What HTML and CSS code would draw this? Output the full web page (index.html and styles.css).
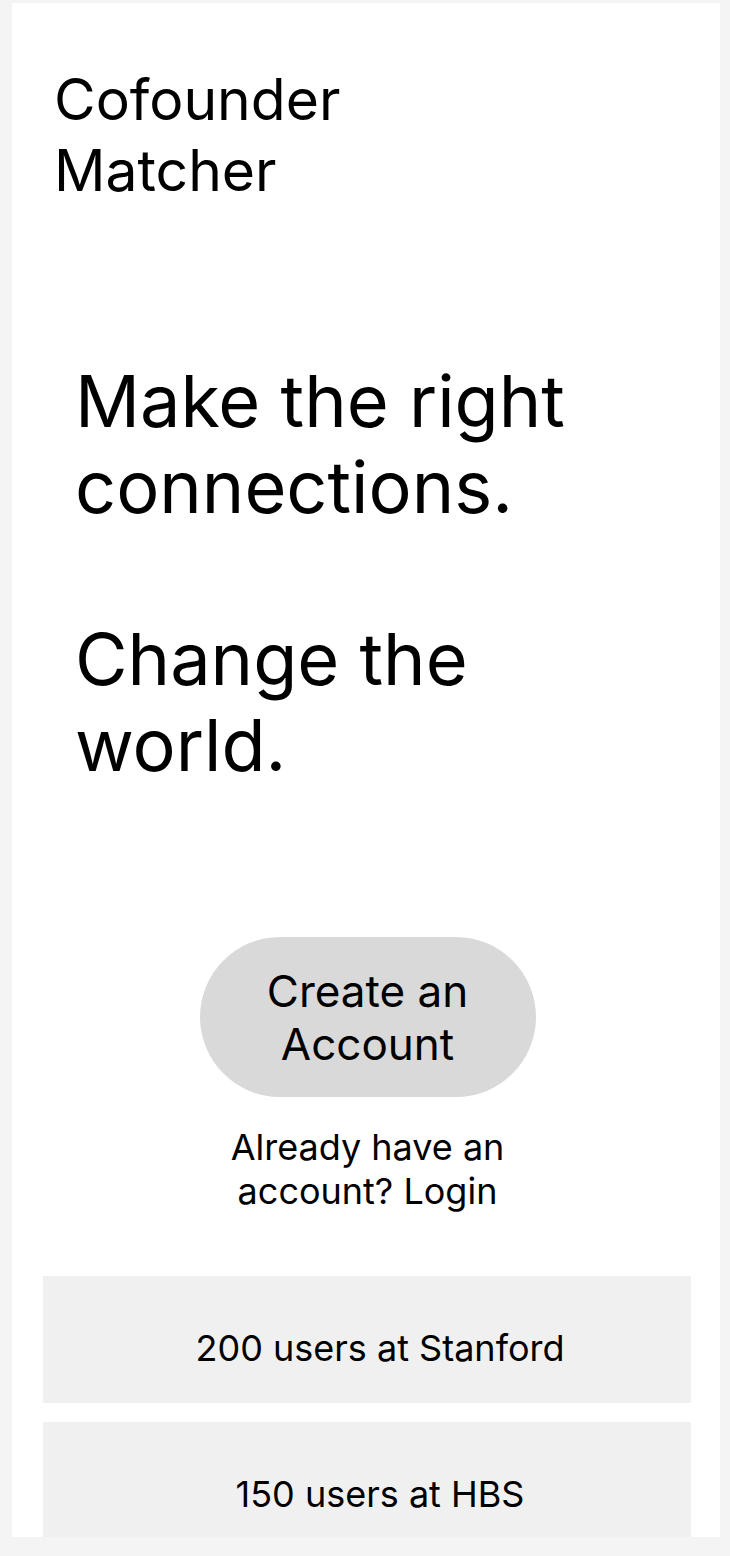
FILE: index.html
```html
<!DOCTYPE html>
<html lang="en">
<head>
<meta charset="utf-8">
<title>Cofounder Matcher</title>
<link rel="stylesheet" href="styles.css">
</head>
<body>
<main class="panel">
  <header class="brand">Cofounder<br>Matcher</header>
  <section class="hero">
    <p class="hero-line">Make the right connections.</p>
    <p class="hero-line">Change the world.</p>
  </section>
  <section class="cta">
    <button class="cta-button">Create an Account</button>
    <p class="login">Already have an account? Login</p>
  </section>
  <section class="stats">
    <div class="stat">200 users at Stanford</div>
    <div class="stat">150 users at HBS</div>
  </section>
</main>
</body>
</html>
```

FILE: styles.css
```css
html, body {
  margin: 0;
  padding: 0;
}
body {
  background: #f4f4f4;
  font-family: Inter, "Noto Sans", sans-serif;
  color: #000;
  height: 1556px;
  overflow: hidden;
}
.panel {
  box-sizing: border-box;
  margin: 3px 0 0 12px;
  width: 708px;
  height: 1534px;
  background: #fff;
  overflow: hidden;
  padding-top: 61px;
}
.brand {
  padding-left: 42px;
  font-size: 57px;
  line-height: 71px;
}
.hero {
  margin-top: 152px;
  padding-left: 63px;
  width: 520px;
}
.hero-line {
  margin: 0;
  font-size: 72px;
  line-height: 86px;
}
.hero-line + .hero-line {
  margin-top: 86px;
}
.cta {
  margin-top: 149px;
  padding-left: 3px;
  display: flex;
  flex-direction: column;
  align-items: center;
}
.cta-button {
  box-sizing: border-box;
  width: 336px;
  height: 160px;
  padding: 2px 20px 0;
  border: none;
  border-radius: 80px;
  background: #d9d9d9;
  font-family: inherit;
  font-size: 44px;
  line-height: 53px;
  color: #000;
}
.login {
  margin: 28px 0 0;
  width: 320px;
  text-align: center;
  font-size: 36px;
  line-height: 44px;
}
.stats {
  margin: 63px 29px 0 31px;
  display: flex;
  flex-direction: column;
  gap: 19px;
}
.stat {
  box-sizing: border-box;
  height: 127px;
  padding: 50px 0 0 26px;
  background: #f0f0f0;
  text-align: center;
  font-size: 36px;
  line-height: 44px;
}
```
